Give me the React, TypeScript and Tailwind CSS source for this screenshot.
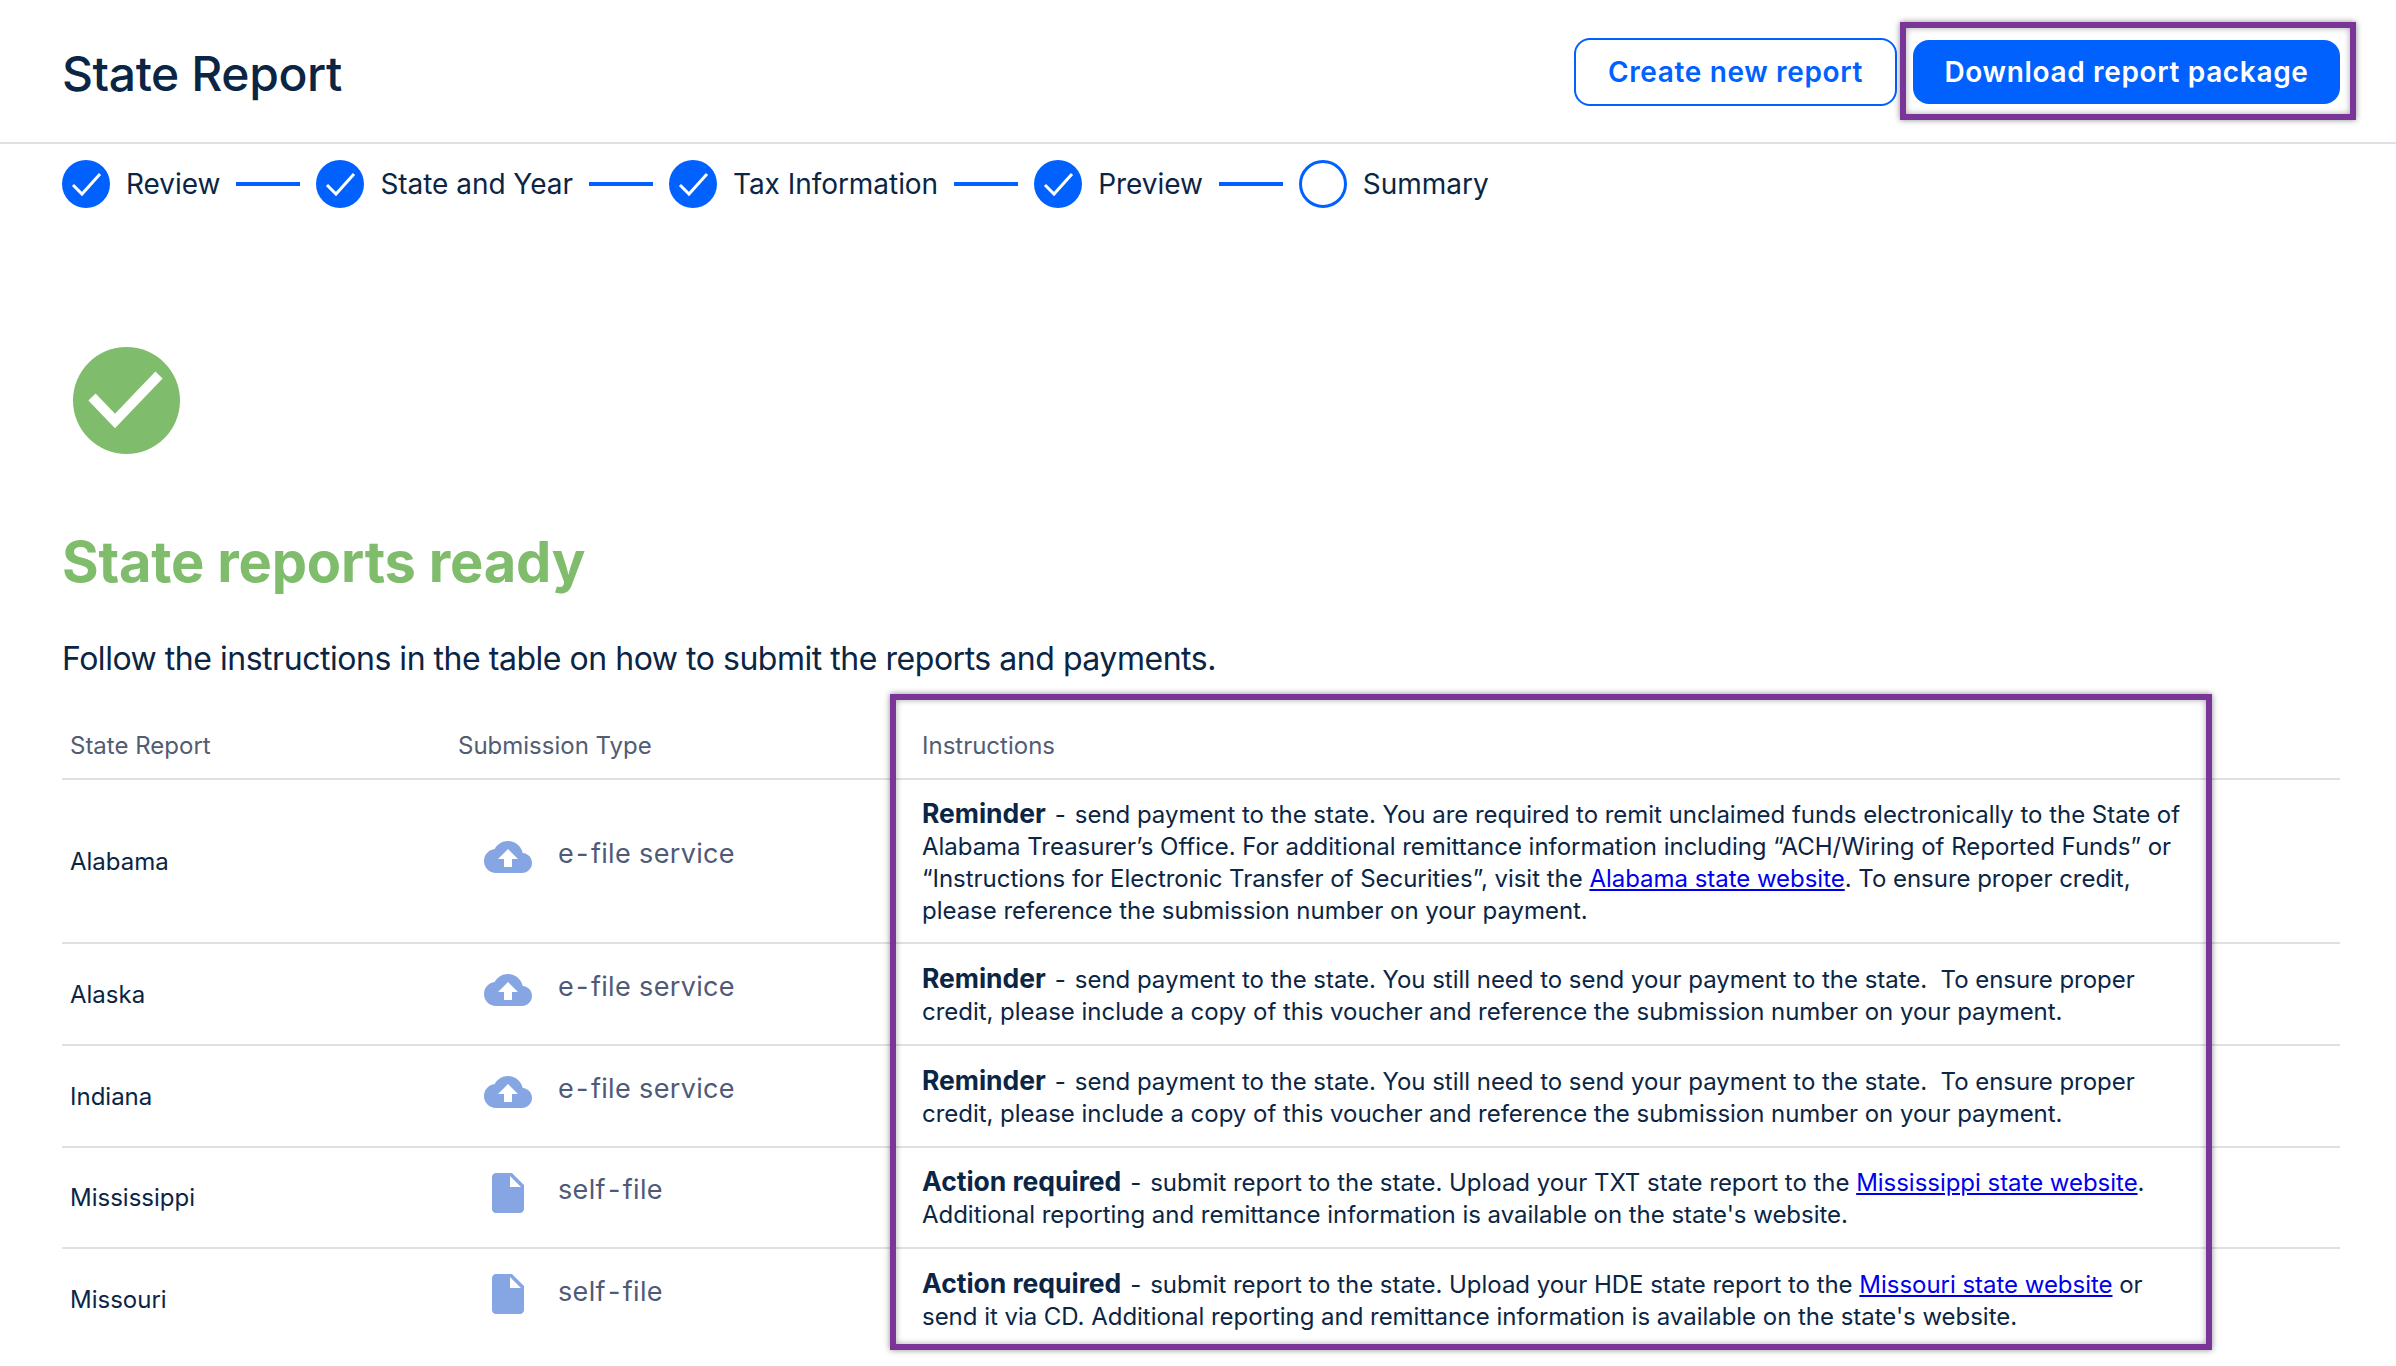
const steps = [
  { label: 'Review', done: true },
  { label: 'State and Year', done: true },
  { label: 'Tax Information', done: true },
  { label: 'Preview', done: true },
  { label: 'Summary', done: false },
]

const CloudIcon = () => (
  <svg viewBox="0 4 24 16" className="h-8 w-12">
    <path
      fillRule="evenodd"
      d="M19.35 10.04C18.67 6.59 15.64 4 12 4 9.11 4 6.6 5.64 5.35 8.04 2.34 8.36 0 10.91 0 14c0 3.31 2.69 6 6 6h13c2.76 0 5-2.24 5-5 0-2.64-2.05-4.78-4.65-4.96zM14 13v4h-4v-4H7l5-5 5 5h-3z"
      fill="#85a6e3"
    />
  </svg>
)

const DocIcon = () => (
  <svg viewBox="4 2 16 20" className="mb-[2px] h-10 w-8">
    <path
      fillRule="evenodd"
      d="M6 2c-1.1 0-1.99.9-1.99 2L4 20c0 1.1.89 2 1.99 2H18c1.1 0 2-.9 2-2V8l-6-6H6zm7 7V3.500L18.500 9H13z"
      fill="#85a6e3"
    />
  </svg>
)

const Link = ({ children }: { children: string }) => (
  <a href="#" className="text-[#0000ee] underline">
    {children}
  </a>
)

const Note = ({ title, children }: { title: string; children: React.ReactNode }) => (
  <>
    <b className="text-[26.5px] font-bold">{title}</b>
    <span className="mx-[9px]">-</span>
    {children}
  </>
)

const rows = [
  {
    state: 'Alabama',
    icon: 'cloud',
    type: ['e', 'file service'],
    height: 'h-[164px]',
    note: (
      <Note title="Reminder">
        send payment to the state. You are required to remit unclaimed funds electronically to the State of
        Alabama Treasurer’s Office. For additional remittance information including “ACH/Wiring of Reported
        Funds” or “Instructions for Electronic Transfer of Securities”, visit the{' '}
        <Link>Alabama state website</Link>. To ensure proper credit, please reference the submission number on
        your payment.
      </Note>
    ),
  },
  {
    state: 'Alaska',
    icon: 'cloud',
    type: ['e', 'file service'],
    height: 'h-[102px]',
    note: (
      <Note title="Reminder">
        send payment to the state. You still need to send your payment to the state. &nbsp;To ensure proper
        credit, please include a copy of this voucher and reference the submission number on your payment.
      </Note>
    ),
  },
  {
    state: 'Indiana',
    icon: 'cloud',
    type: ['e', 'file service'],
    height: 'h-[102px]',
    note: (
      <Note title="Reminder">
        send payment to the state. You still need to send your payment to the state. &nbsp;To ensure proper
        credit, please include a copy of this voucher and reference the submission number on your payment.
      </Note>
    ),
  },
  {
    state: 'Mississippi',
    icon: 'doc',
    type: ['self', 'file'],
    height: 'h-[101px]',
    note: (
      <Note title="Action required">
        submit report to the state. Upload your TXT state report to the <Link>Mississippi state website</Link>.
        Additional reporting and remittance information is available on the state's website.
      </Note>
    ),
  },
  {
    state: 'Missouri',
    icon: 'doc',
    type: ['self', 'file'],
    height: 'h-[101px]',
    note: (
      <Note title="Action required">
        submit report to the state. Upload your HDE state report to the <Link>Missouri state website</Link> or
        send it via CD. Additional reporting and remittance information is available on the state's website.
      </Note>
    ),
  },
]

export default function App() {
  return (
    <div className="relative h-[1366px] overflow-hidden bg-white font-['Inter',sans-serif] text-[#0b2545]">
      {/* highlight boxes from the annotated screenshot */}
      <div className="absolute left-[1900px] top-[22px] h-[98px] w-[456px] border-[6px] border-[#793597] shadow-[0_0_6px_rgba(0,0,0,0.45),inset_0_0_6px_rgba(0,0,0,0.35)]" />
      <div className="absolute left-[890px] top-[694px] h-[656px] w-[1322px] border-[6px] border-[#793597] shadow-[0_0_6px_rgba(0,0,0,0.45),inset_0_0_6px_rgba(0,0,0,0.35)]" />

      <header className="flex h-[144px] items-center justify-between border-b-2 border-[#dde1e6] pl-[62px] pr-[56px] pt-[2px]">
        <h1 className="pt-[3px] text-[48px] font-medium tracking-[-0.4px]">State Report</h1>
        <div className="flex items-center gap-4">
          <button className="flex h-[68px] w-[323px] items-center justify-center rounded-2xl border-2 border-[#0061ff] text-[28px] font-semibold tracking-[0.65px] text-[#0061ff]">
            Create new report
          </button>
          <button className="flex h-[64px] w-[427px] items-center justify-center rounded-2xl bg-[#0061ff] text-[28px] font-semibold tracking-[0.65px] text-white">
            Download report package
          </button>
        </div>
      </header>

      <nav className="flex items-center pl-[62px] pt-[16px]">
        {steps.map((step, i) => (
          <div key={step.label} className="flex items-center">
            {step.done ? (
              <svg viewBox="0 0 48 48" className="h-12 w-12">
                <circle cx="24" cy="24" r="24" fill="#0061ff" />
                <path d="M11 25l9 9 18-20" fill="none" stroke="#fff" strokeWidth="3" />
              </svg>
            ) : (
              <span className="h-12 w-12 rounded-full border-[3px] border-[#0061ff]" />
            )}
            <span className="ml-4 text-[28px] tracking-[-0.04px]">{step.label}</span>
            {i < steps.length - 1 && <span className="mx-4 h-1 w-16 bg-[#0061ff]" />}
          </div>
        ))}
      </nav>

      <main className="pl-[62px] pr-[56px] pt-[139px]">
        <svg viewBox="0 0 107 107" className="ml-[11px] h-[107px] w-[107px]">
          <circle cx="53.500" cy="53.500" r="53.500" fill="#7fbc6b" />
          <path d="M19 50l23 24 44-46" fill="none" stroke="#fff" strokeWidth="10" />
        </svg>
        <h2 className="mt-[74px] text-[56px] font-bold leading-[68px] tracking-[-0.2px] text-[#7fbc6b]">
          State reports ready
        </h2>
        <p className="mt-[43px] text-[32px] leading-10 tracking-[-0.47px]">
          Follow the instructions in the table on how to submit the reports and payments.
        </p>

        <table className="mt-[33px] w-full table-fixed border-collapse">
          <colgroup>
            <col className="w-[388px]" />
            <col className="w-[464px]" />
            <col />
          </colgroup>
          <thead>
            <tr className="h-[67px] border-b-2 border-[#dde1e6] text-left text-[24px] text-[#525c72]">
              <th className="pl-2 pt-[2px] font-normal">State Report</th>
              <th className="pl-2 pt-[2px] font-normal">Submission Type</th>
              <th className="pl-2 pt-[2px] font-normal">Instructions</th>
            </tr>
          </thead>
          <tbody>
            {rows.map((row) => (
              <tr key={row.state} className={`${row.height} border-b-2 border-[#dde1e6] last:border-b-0`}>
                <td className="pl-2 pt-[1px] text-[24px]">{row.state}</td>
                <td className="pl-[34px]">
                  <div className="flex items-center pb-2">
                    <span className="flex w-12 justify-center">
                      {row.icon === 'cloud' ? <CloudIcon /> : <DocIcon />}
                    </span>
                    <span className="ml-[26px] pb-[6px] text-[27px] tracking-[0.35px] text-[#4f5a78]">
                      {row.type[0]}
                      <span className="mx-[2px]">-</span>
                      {row.type[1]}
                    </span>
                  </div>
                </td>
                <td className="pl-2 pr-[150px] pt-[1px] text-[24px] leading-8 tracking-[-0.03px]">{row.note}</td>
              </tr>
            ))}
          </tbody>
        </table>
      </main>
    </div>
  )
}
